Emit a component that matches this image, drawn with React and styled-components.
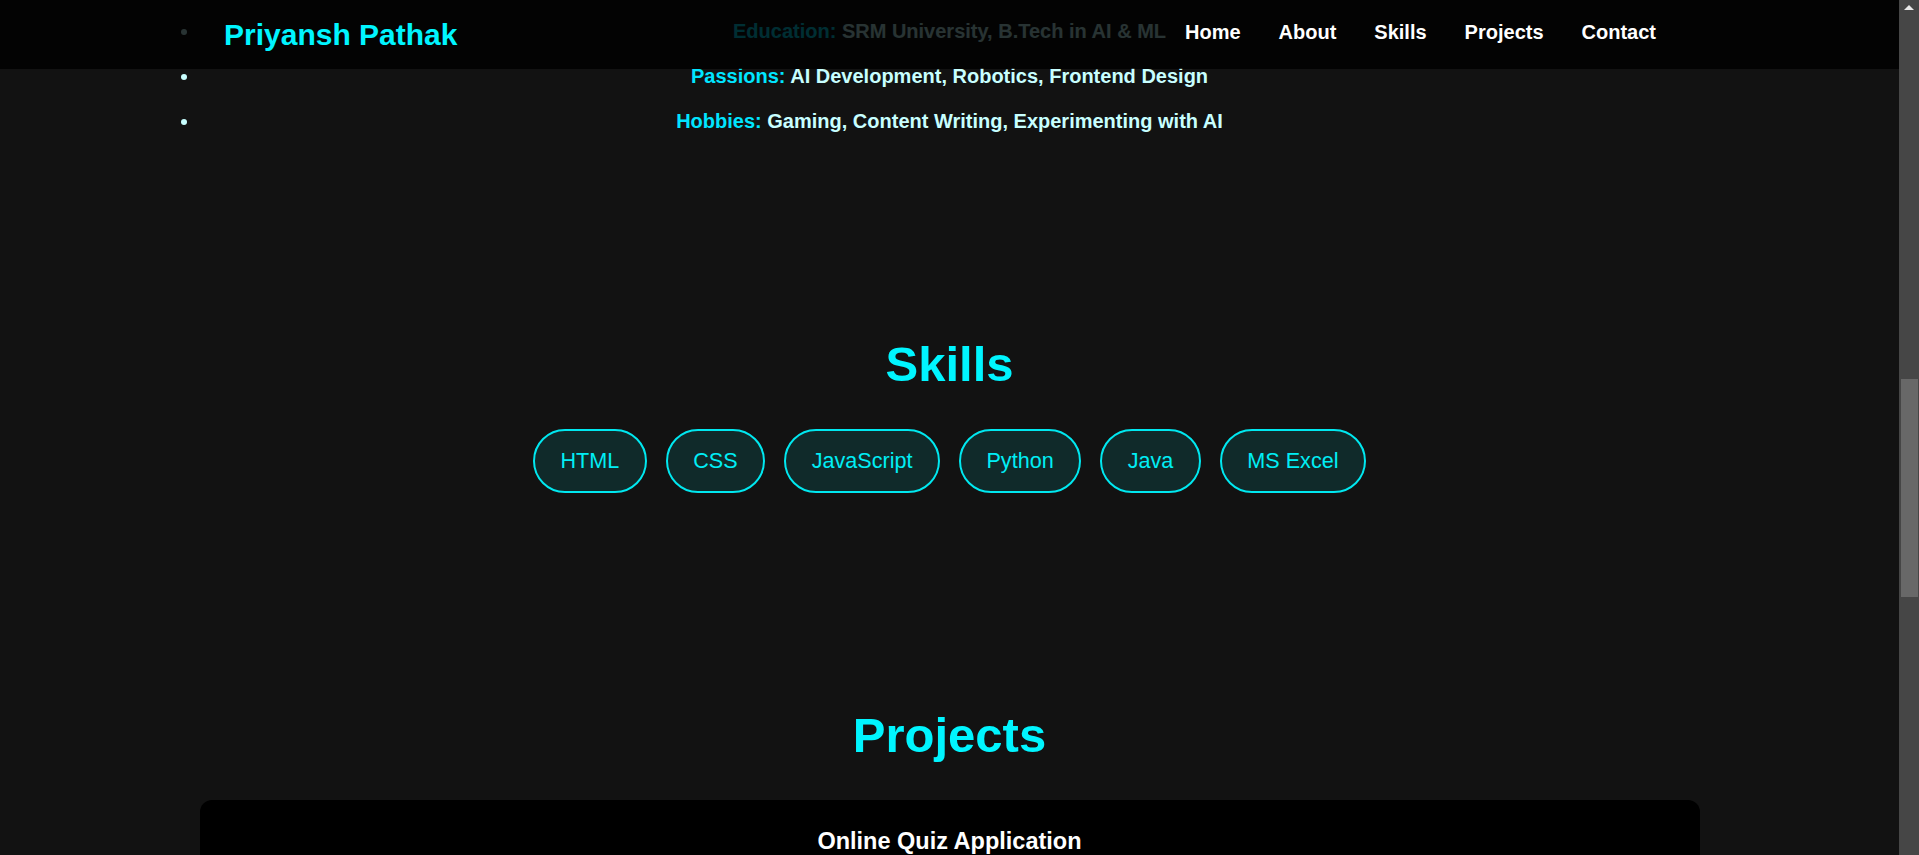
import React from "react";
import styled, { createGlobalStyle } from "styled-components";

const GlobalStyle = createGlobalStyle`
  html, body {
    margin: 0;
    padding: 0;
    height: 100%;
    overflow: hidden;
    background: #121212;
  }
  body {
    font-family: "Liberation Sans", Arial, sans-serif;
  }
  * {
    box-sizing: border-box;
  }
`;

const Frame = styled.div`
  display: flex;
  height: 100vh;
`;

const Viewport = styled.div`
  position: relative;
  flex: 1;
  overflow: hidden;
  background: #121212;
`;

const Header = styled.header`
  position: absolute;
  top: 0;
  left: 0;
  right: 0;
  z-index: 10;
  height: 69px;
  display: flex;
  align-items: center;
  justify-content: space-between;
  padding: 0 224px;
  background: rgba(0, 0, 0, 0.8);
`;

const Logo = styled.div`
  font-size: 30px;
  font-weight: bold;
  line-height: 1;
  color: #00f5ff;
`;

const NavList = styled.ul`
  display: flex;
  margin: 0 0 4px;
  padding: 0;
  list-style: none;
`;

const NavItem = styled.li`
  margin: 0 19px;
  a {
    color: #fff;
    font-size: 20px;
    font-weight: bold;
    text-decoration: none;
  }
`;

const Main = styled.main`
  padding-top: 20px;
`;

const Section = styled.section`
  padding: ${(p) => (p.$first ? "0 0 100px" : "100px 0")};
`;

const AboutList = styled.ul`
  width: 1500px;
  margin: 0 auto 3px;
  padding: 0;
  list-style: disc outside;
  color: #c8ffff;
  li {
    font-size: 20px;
    font-weight: bold;
    line-height: 23px;
    text-align: center;
    margin-bottom: 22px;
    &:last-child {
      margin-bottom: 0;
    }
  }
`;

const Label = styled.span`
  color: #00e5ff;
`;

const SectionTitle = styled.h2`
  margin: 0 0 37px;
  font-size: 49px;
  line-height: 56px;
  font-weight: bold;
  text-align: center;
  color: #00f5ff;
`;

const SkillRow = styled.div`
  display: flex;
  justify-content: center;
  gap: 19px;
  margin-bottom: 14px;
`;

const SkillPill = styled.div`
  padding: 17px 25.5px;
  font-size: 21.6px;
  line-height: 26px;
  color: #00eef5;
  background: rgba(0, 255, 255, 0.1);
  border: 2px solid #00e8f0;
  border-radius: 34px;
`;

const ProjectCard = styled.div`
  width: 1500px;
  margin: 0 auto;
  padding: 28px 30px 40px;
  background: #000;
  border-radius: 12px;
  text-align: center;
  h3 {
    margin: 0 0 14px;
    font-size: 23.5px;
    line-height: 27px;
    font-weight: bold;
    color: #fff;
  }
  p {
    margin: 0;
    font-size: 18px;
    color: #ccc;
  }
`;

const ScrollRail = styled.div`
  width: 20px;
  height: 100%;
  display: flex;
  flex-direction: column;
  align-items: center;
  background: #464646;
`;

const ArrowUp = styled.div`
  width: 0;
  height: 0;
  margin-top: 5px;
  border-left: 5px solid transparent;
  border-right: 5px solid transparent;
  border-bottom: 5px solid #e8e8e8;
`;

const Thumb = styled.div`
  width: 17px;
  height: 218px;
  margin: 369px 1px 0 2px;
  align-self: flex-start;
  background: #686868;
`;

const navLinks = ["Home", "About", "Skills", "Projects", "Contact"];
const skills = ["HTML", "CSS", "JavaScript", "Python", "Java", "MS Excel"];
const aboutItems = [
  { label: "Education:", text: "SRM University, B.Tech in AI & ML" },
  { label: "Passions:", text: "AI Development, Robotics, Frontend Design" },
  { label: "Hobbies:", text: "Gaming, Content Writing, Experimenting with AI" },
];

export default function App() {
  return (
    <Frame>
      <GlobalStyle />
      <Viewport>
        <Header>
          <Logo>Priyansh Pathak</Logo>
          <nav>
            <NavList>
              {navLinks.map((link) => (
                <NavItem key={link}>
                  <a href={`#${link.toLowerCase()}`}>{link}</a>
                </NavItem>
              ))}
            </NavList>
          </nav>
        </Header>
        <Main>
          <Section id="about" $first>
            <AboutList>
              {aboutItems.map((item) => (
                <li key={item.label}>
                  <Label>{item.label}</Label> {item.text}
                </li>
              ))}
            </AboutList>
          </Section>
          <Section id="skills">
            <SectionTitle>Skills</SectionTitle>
            <SkillRow>
              {skills.map((skill) => (
                <SkillPill key={skill}>{skill}</SkillPill>
              ))}
            </SkillRow>
          </Section>
          <Section id="projects">
            <SectionTitle>Projects</SectionTitle>
            <ProjectCard>
              <h3>Online Quiz Application</h3>
              <p>
                A responsive quiz app with timed questions, score tracking and
                instant feedback.
              </p>
            </ProjectCard>
          </Section>
        </Main>
      </Viewport>
      <ScrollRail>
        <ArrowUp />
        <Thumb />
      </ScrollRail>
    </Frame>
  );
}
